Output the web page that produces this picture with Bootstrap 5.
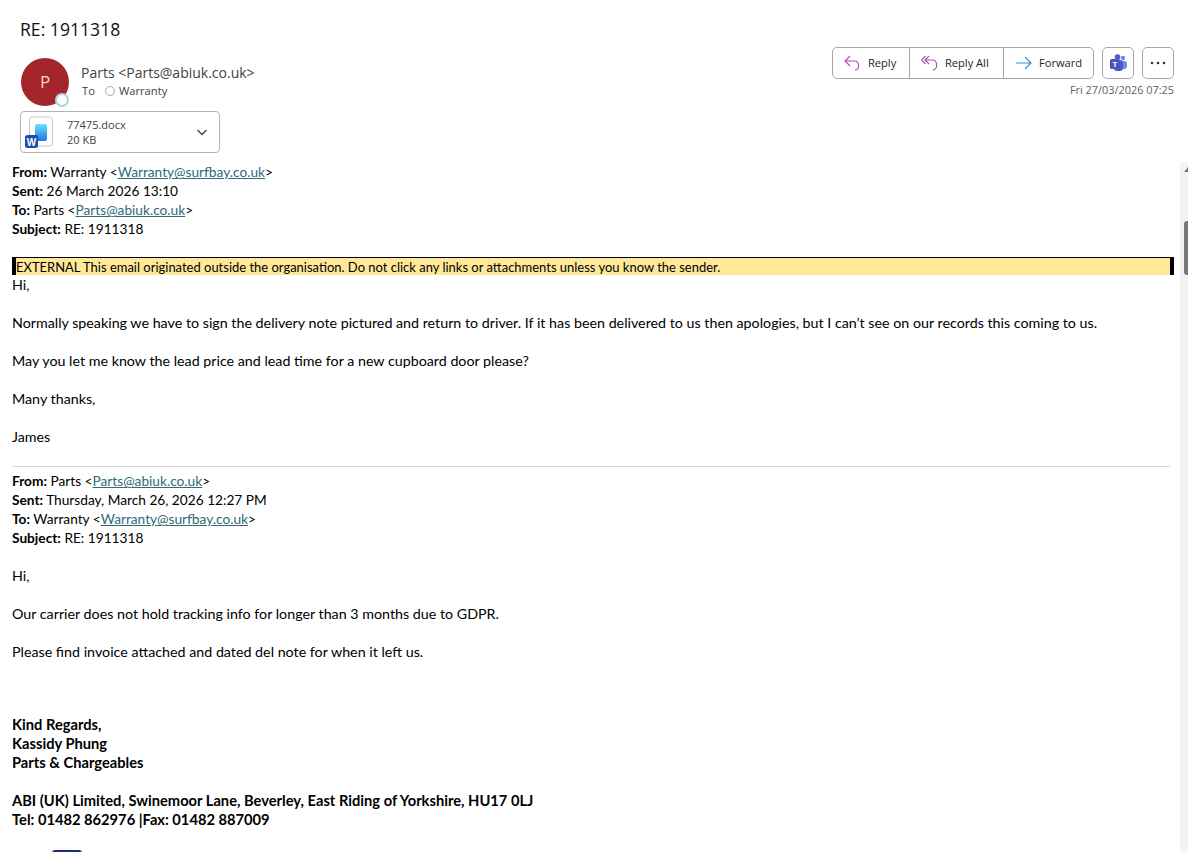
<!doctype html>
<html lang="en"><head><meta charset="utf-8"><title>RE: 1911318</title>
<link href="https://cdn.jsdelivr.net/npm/bootstrap@5.3.0/dist/css/bootstrap.min.css" rel="stylesheet">
<style>
html,body{height:852px;overflow:hidden;background:#fff}
body{font-family:"Open Sans",sans-serif;color:#000;font-size:13px}
.mail-subject{font-size:17.6px;line-height:24px;padding:17px 0 0 20px;height:47px;color:#111}
.mail-head{height:115px;padding:0 14px 0 20px}
.avatar{width:48px;height:48px;margin:11px 0 0 1px;background:#a4262c;color:#fdd9a8;font-size:17px}
.presence{width:14px;height:14px;right:0;bottom:-1px;background:#fff;border:2px solid #b4cfdf}
.sender{font-size:14px;line-height:19px;color:#424242;margin:16px 0 0 12px}
.recipient{font-size:11.2px;line-height:17px;color:#424242;margin-left:13px}
.mini-dot{width:10px;height:10px;border:1px solid #8fb4cc;margin:0 4px 0 10px}
.attach{width:200px;height:42px;margin-top:5px;border:1px solid #b3b3b3;border-radius:4px;font-size:11px;line-height:15px;color:#424242;padding:0 11px 0 4px}
.attach-text{margin-left:14px}
.btn-set{height:32px;border:1px solid #a8a8a8;border-radius:5px;font-size:11.1px;line-height:28px;color:#242424}
.act{height:30px;border-right:1px solid #a8a8a8;padding-left:11px;gap:7px}
.act:nth-child(1){width:77px}
.act:nth-child(2){width:94px}
.act:nth-child(3){width:89px;border-right:0}
.square{width:32px;height:32px;border:1px solid #a8a8a8;border-radius:5px}
.stamp{font-size:10.9px;line-height:16px;color:#616161;margin-top:3px}
.msg-body{padding:0 14px 0 12px;font-size:14.27px;line-height:19px;font-family:"Lato",sans-serif}
.msg-body a{color:#2f6a78}
.msg-body p{margin:0 0 19px}
.msg-body .meta{font-size:13.7px}
.warn{height:18px;background:#ffe999;border:solid #000;border-width:1px 4px 0;font-size:12.97px;line-height:18px}
.divider{border-top:1px solid #d9d9d9;margin:20px 4px 4px 0}
.gap-before{margin-bottom:54px!important}
.msg-body .sign{font-weight:700;font-size:14.7px}
.logo-peek{width:30px;height:3px;margin:21px 0 0 40px;background:#1f2a7c;border-radius:15px 15px 0 0}
.track{right:0;top:162px;bottom:0;width:8px;background:#f3f3f3;border-radius:4px 0 0 0}
.thumb{right:0;top:59px;width:4px;height:54px;background:#777;border-radius:3px 0 0 3px}
.arrow{right:0;top:5px;width:0;height:0;border-left:4px solid transparent;border-bottom:5px solid #777}
</style></head>
<body class="position-relative">
<div class="mail-subject">RE: 1911318</div>
<div class="mail-head d-flex justify-content-between">
 <div>
  <div class="d-flex">
   <div class="avatar rounded-circle position-relative d-flex align-items-center justify-content-center">P<span class="presence rounded-circle position-absolute"></span></div>
   <div>
    <div class="sender">Parts &lt;Parts@abiuk.co.uk&gt;</div>
    <div class="recipient d-flex align-items-center">To<span class="mini-dot rounded-circle"></span>Warranty</div>
   </div>
  </div>
  <div class="attach d-flex align-items-center">
   <svg width="28" height="32" viewBox="0 0 28 32"><defs><linearGradient id="wd" x1="0" y1="0" x2="0" y2="1"><stop offset="0" stop-color="#6fe0fb"/><stop offset="1" stop-color="#1a78e0"/></linearGradient></defs><rect x="4.5" y="1" width="23" height="29" rx="3" fill="#fff" stroke="#c8c8c8"/><rect x="10" y="8" width="12" height="17" rx="2" fill="url(#wd)"/><rect x="0" y="19" width="13" height="13" rx="2.5" fill="#1a4fa8"/><text x="6.5" y="29.5" text-anchor="middle" font-size="10" font-weight="700" fill="#fff" font-family="Liberation Sans">W</text></svg>
   <div class="attach-text flex-grow-1"><div>77475.docx</div><div>20 KB</div></div>
   <svg width="12" height="12" viewBox="0 0 12 12"><path d="M1.500 4l4.500 4.500L10.500 4" fill="none" stroke="#424242" stroke-width="1.300"/></svg>
  </div>
 </div>
 <div class="text-end">
  <div class="d-flex gap-2 justify-content-end">
   <div class="btn-set d-flex">
    <div class="act d-flex align-items-center"><svg width="17" height="16" viewBox="0 0 17 16"><path d="M6 1L1 6l5 5M1 6h9c6 0 6 9 1 9" fill="none" stroke="#a94bb5" stroke-width="1.100"/></svg>Reply</div>
    <div class="act d-flex align-items-center"><svg width="17" height="16" viewBox="0 0 17 16"><path d="M4.500 1L.5 5l4 4M8 1L4 5l4 4M4 5h7c6 0 6 9 1 10" fill="none" stroke="#a94bb5" stroke-width="1.100"/></svg>Reply All</div>
    <div class="act d-flex align-items-center"><svg width="17" height="14" viewBox="0 0 17 14"><path d="M1 7h15M10 1l6 6-6 6" fill="none" stroke="#2f8fd0" stroke-width="1.100"/></svg>Forward</div>
   </div>
   <div class="square d-flex align-items-center justify-content-center"><svg width="18" height="18" viewBox="0 0 18 18"><circle cx="14" cy="4" r="2.200" fill="#7b83eb"/><rect x="10" y="7" width="8" height="8" rx="3" fill="#7b83eb"/><circle cx="8.500" cy="3" r="2.800" fill="#5059c9"/><rect x="5" y="6" width="9" height="11" rx="3" fill="#5059c9"/><rect x="1" y="5" width="10" height="10" rx="1.500" fill="#4b53bc"/><text x="6" y="13" text-anchor="middle" font-size="8" font-weight="700" fill="#fff" font-family="Liberation Sans">T</text></svg></div>
   <div class="square d-flex align-items-center justify-content-center"><svg width="16" height="4" viewBox="0 0 16 4"><circle cx="2" cy="2" r="1.300" fill="#333"/><circle cx="8" cy="2" r="1.300" fill="#333"/><circle cx="14" cy="2" r="1.300" fill="#333"/></svg></div>
  </div>
  <div class="stamp">Fri 27/03/2026 07:25</div>
 </div>
</div>
<div class="msg-body">
 <p class="meta"><b>From:</b> Warranty &lt;<a href="#">Warranty@surfbay.co.uk</a>&gt;<br><b>Sent:</b> 26 March 2026 13:10<br><b>To:</b> Parts &lt;<a href="#">Parts@abiuk.co.uk</a>&gt;<br><b>Subject:</b> RE: 1911318</p>
 <div class="warn">EXTERNAL This email originated outside the organisation. Do not click any links or attachments unless you know the sender.</div>
 <p>Hi,</p>
 <p>Normally speaking we have to sign the delivery note pictured and return to driver. If it has been delivered to us then apologies, but I can’t see on our records this coming to us.</p>
 <p>May you let me know the lead price and lead time for a new cupboard door please?</p>
 <p>Many thanks,</p>
 <p class="mb-0">James</p>
 <div class="divider"></div>
 <p class="meta"><b>From:</b> Parts &lt;<a href="#">Parts@abiuk.co.uk</a>&gt;<br><b>Sent:</b> Thursday, March 26, 2026 12:27 PM<br><b>To:</b> Warranty &lt;<a href="#">Warranty@surfbay.co.uk</a>&gt;<br><b>Subject:</b> RE: 1911318</p>
 <p>Hi,</p>
 <p>Our carrier does not hold tracking info for longer than 3 months due to GDPR.</p>
 <p class="gap-before">Please find invoice attached and dated del note for when it left us.</p>
 <p class="sign">Kind Regards,<br>Kassidy Phung<br>Parts &amp; Chargeables</p>
 <p class="sign mb-0">ABI (UK) Limited, Swinemoor Lane, Beverley, East Riding of Yorkshire, HU17 0LJ<br>Tel: 01482 862976 |Fax: 01482 887009</p>
 <div class="logo-peek"></div>
</div>
<div class="track position-absolute"><div class="thumb position-absolute"></div><div class="arrow position-absolute"></div></div>
</body></html>
